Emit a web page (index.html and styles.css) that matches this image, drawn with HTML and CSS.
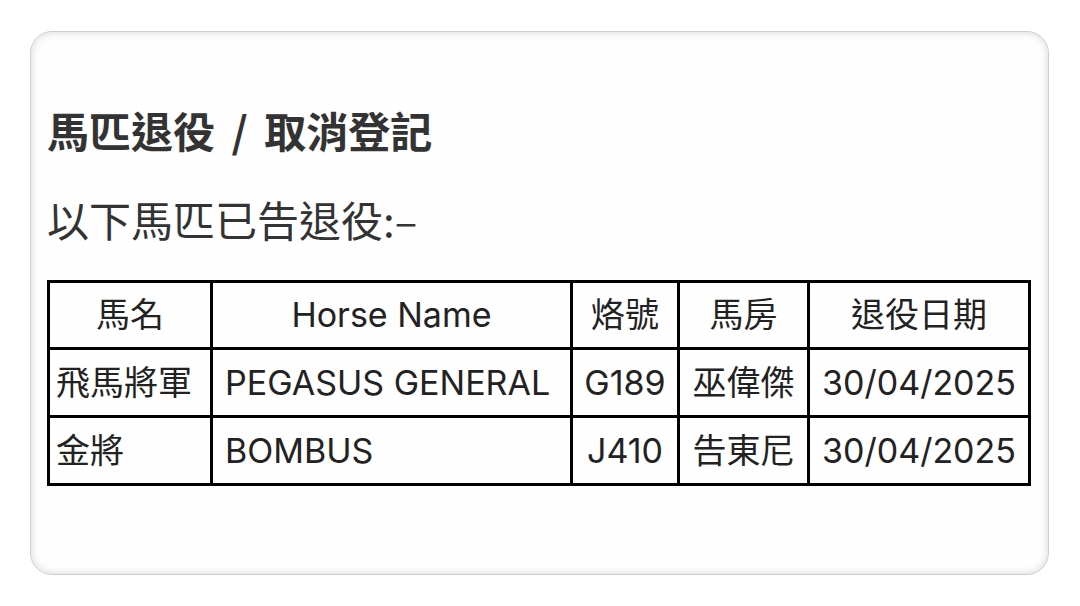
FILE: index.html
```html
<!DOCTYPE html>
<html lang="zh-Hant">
<head>
<meta charset="utf-8">
<title>馬匹退役 / 取消登記</title>
<link rel="stylesheet" href="styles.css">
</head>
<body>
<div class="page">
  <div class="card">
    <h1 class="title">馬匹退役 / 取消登記</h1>
    <p class="lead">以下馬匹已告退役:–</p>
    <table class="grid">
      <colgroup>
        <col class="c1"><col class="c2"><col class="c3"><col class="c4"><col class="c5">
      </colgroup>
      <thead>
        <tr>
          <th>馬名</th>
          <th>Horse Name</th>
          <th>烙號</th>
          <th>馬房</th>
          <th>退役日期</th>
        </tr>
      </thead>
      <tbody>
        <tr>
          <td class="left">飛馬將軍</td>
          <td class="left wide">PEGASUS GENERAL</td>
          <td>G189</td>
          <td>巫偉傑</td>
          <td>30/04/2025</td>
        </tr>
        <tr>
          <td class="left">金將</td>
          <td class="left wide">BOMBUS</td>
          <td>J410</td>
          <td>告東尼</td>
          <td>30/04/2025</td>
        </tr>
      </tbody>
    </table>
  </div>
</div>
</body>
</html>
```

FILE: styles.css
```css
html, body {
  margin: 0;
  padding: 0;
  background: #ffffff;
}

.page {
  width: 1080px;
  height: 606px;
  padding: 31px 0 0 30px;
  box-sizing: border-box;
}

.card {
  width: 1019px;
  height: 544px;
  box-sizing: border-box;
  border: 1px solid #cfcfcf;
  border-radius: 22px;
  background: #fefefe;
  box-shadow: inset 0 0 9px rgba(0, 0, 0, 0.16);
  padding: 73px 17px 0 16px;
  font-family: "Inter", "Liberation Sans", "Noto Sans CJK TC", sans-serif;
  color: #333333;
}

.title {
  margin: 0;
  font-family: "Noto Sans CJK TC", sans-serif;
  font-size: 42px;
  line-height: 50px;
  font-weight: 700;
  word-spacing: 7px;
  color: #333333;
}

.lead {
  margin: 39px 0 0 0;
  font-family: "Noto Sans CJK TC", sans-serif;
  font-size: 42px;
  line-height: 50px;
  font-weight: 400;
  color: #333333;
}

.grid {
  margin-top: 36px;
  width: 984px;
  table-layout: fixed;
  border-collapse: collapse;
  border: 3px solid #000000;
  font-size: 34px;
  color: #222222;
}

.c1 { width: 163px; }
.c2 { width: 360px; }
.c3 { width: 107px; }
.c4 { width: 130px; }
.c5 { width: 221px; }

.grid th,
.grid td {
  border: 3px solid #000000;
  height: 64px;
  padding: 0 4px;
  text-align: center;
  font-weight: 400;
  white-space: nowrap;
  line-height: 40px;
}

.grid tbody td {
  height: 65px;
}

.grid td.left {
  text-align: left;
  padding-left: 6px;
}

.grid td.wide {
  padding-left: 12px;
}
```
